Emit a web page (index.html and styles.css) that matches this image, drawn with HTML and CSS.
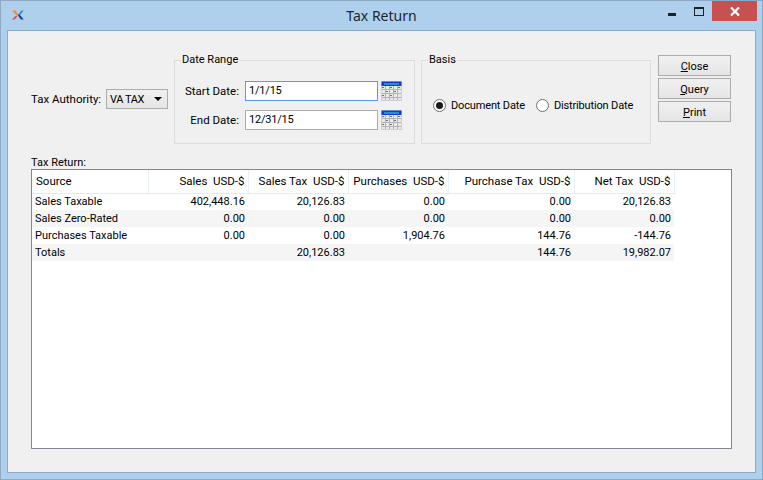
FILE: index.html
```html
<!DOCTYPE html>
<html lang="en">
<head>
<meta charset="utf-8">
<title>Tax Return</title>
<link rel="stylesheet" href="styles.css">
</head>
<body>
<svg class="defs" width="0" height="0" aria-hidden="true">
  <defs>
    <symbol id="cal" viewBox="0 0 21 20" preserveAspectRatio="none">
      <rect x="0" y="0" width="21" height="20" fill="#cfcfcf"/>
      <rect x="0.5" y="0.5" width="20" height="4.5" fill="#0b3ce0"/>
      <rect x="3" y="2" width="15" height="2" fill="#2e8fb0"/>
      <rect x="1" y="5" width="19" height="14" fill="#e8e8e8"/>
      <g fill="#b4b4b4">
        <rect x="1" y="8" width="19" height="1"/><rect x="1" y="12" width="19" height="1"/><rect x="1" y="16" width="19" height="1"/>
        <rect x="4" y="5" width="1" height="14"/><rect x="8" y="5" width="1" height="14"/><rect x="12" y="5" width="1" height="14"/><rect x="16" y="5" width="1" height="14"/>
      </g>
      <g fill="#707070">
        <rect x="1" y="6" width="2" height="1"/><rect x="9" y="6" width="2" height="1"/><rect x="17" y="6" width="2" height="1"/>
        <rect x="5" y="10" width="2" height="1"/><rect x="13" y="10" width="2" height="1"/><rect x="1" y="14" width="2" height="1"/><rect x="9" y="14" width="2" height="1"/>
      </g>
    </symbol>
  </defs>
</svg>
<div class="window">
  <header class="titlebar">
    <svg class="logo" width="12" height="10" viewBox="0 0 14 12">
      <path d="M0 0.5h4l3 4.5-1.6 1.6z" fill="#f08a35"/>
      <path d="M0 11.5l4.7-5 1.3 1.2-3.2 3.8z" fill="#e2402c"/>
      <path d="M8 4.5l3-4h3l-5 6z" fill="#2d8fe0"/>
      <path d="M6.5 6l1.8-1.2 5.7 6.7h-3.6z" fill="#1c3f9c"/>
    </svg>
    <h1 class="title">Tax Return</h1>
    <div class="controls">
      <span class="ctl ctl-min"><i></i></span>
      <span class="ctl ctl-max"><i></i></span>
      <span class="ctl ctl-close">
        <svg width="10" height="9" viewBox="0 0 10 9"><path d="M1 0.5l8 8M9 0.5l-8 8" stroke="#fff" stroke-width="2.2" fill="none"/></svg>
      </span>
    </div>
  </header>
  <main class="client">
    <section class="top">
      <div class="authority">
        <label class="lbl auth-lbl">Tax Authority:</label>
        <div class="combo"><span>VA TAX</span><i class="arrow"></i></div>
      </div>
      <fieldset class="group range">
        <legend>Date Range</legend>
        <div class="date-row">
          <label class="lbl date-lbl">Start Date:</label>
          <div class="input focus">1/1/15</div>
          <svg class="cal" width="21" height="20"><use href="#cal"/></svg>
        </div>
        <div class="date-row">
          <label class="lbl date-lbl">End Date:</label>
          <div class="input">12/31/15</div>
          <svg class="cal" width="21" height="20"><use href="#cal"/></svg>
        </div>
      </fieldset>
      <fieldset class="group basis">
        <legend>Basis</legend>
        <div class="radios">
          <span class="radio on"><i></i>Document Date</span>
          <span class="radio"><i></i>Distribution Date</span>
        </div>
      </fieldset>
      <div class="buttons">
        <button class="btn"><u>C</u>lose</button>
        <button class="btn"><u>Q</u>uery</button>
        <button class="btn"><u>P</u>rint</button>
      </div>
    </section>
    <div class="list-label">Tax Return:</div>
    <div class="list">
      <table class="grid">
        <colgroup>
          <col class="c-source"><col class="c-n"><col class="c-n"><col class="c-n"><col class="c-w"><col class="c-n">
        </colgroup>
        <thead>
          <tr>
            <th class="left">Source</th>
            <th>Sales&nbsp; USD-$</th>
            <th>Sales Tax&nbsp; USD-$</th>
            <th>Purchases&nbsp; USD-$</th>
            <th>Purchase Tax&nbsp; USD-$</th>
            <th>Net Tax&nbsp; USD-$</th>
          </tr>
        </thead>
        <tbody>
          <tr><td class="left">Sales Taxable</td><td>402,448.16</td><td>20,126.83</td><td>0.00</td><td>0.00</td><td>20,126.83</td></tr>
          <tr><td class="left">Sales Zero-Rated</td><td>0.00</td><td>0.00</td><td>0.00</td><td>0.00</td><td>0.00</td></tr>
          <tr><td class="left">Purchases Taxable</td><td>0.00</td><td>0.00</td><td>1,904.76</td><td>144.76</td><td>-144.76</td></tr>
          <tr><td class="left">Totals</td><td></td><td>20,126.83</td><td></td><td>144.76</td><td>19,982.07</td></tr>
        </tbody>
      </table>
    </div>
  </main>
</div>
</body>
</html>
```
FILE: styles.css
```css
* { box-sizing: border-box; }
html, body { margin: 0; padding: 0; }
body {
  width: 763px;
  height: 480px;
  overflow: hidden;
  font-family: Roboto, "Noto Sans", sans-serif;
  font-size: 11.5px;
  color: #000;
}
.defs { display: block; height: 0; }
.window {
  width: 763px;
  height: 480px;
  background: #aed0ec;
  border: 1px solid #8ea9c4;
  display: flex;
  flex-direction: column;
  padding: 0 6px 6px;
}
.titlebar {
  height: 29px;
  flex: none;
  display: flex;
  align-items: center;
  position: relative;
  padding-left: 5px;
}
.logo { margin-top: -1px; }
.title {
  position: absolute;
  left: 0;
  right: 0;
  top: 5px;
  margin: 0;
  text-align: center;
  font-family: "Noto Sans", sans-serif;
  font-size: 14px;
  font-weight: 400;
  line-height: 20px;
  color: #1c2530;
}
.controls {
  position: absolute;
  right: -1px;
  top: 0;
  display: flex;
  align-items: flex-start;
}
.ctl { display: block; height: 20px; position: relative; }
.ctl-min { width: 26px; }
.ctl-min i { position: absolute; left: 9px; top: 12px; width: 8px; height: 3px; background: #1b2228; }
.ctl-max { width: 27px; }
.ctl-max i { position: absolute; left: 9px; top: 6px; width: 10px; height: 9px; border: 1px solid #1b2228; border-top-width: 2px; }
.ctl-close {
  width: 45px;
  background: #c75050;
  display: flex;
  align-items: center;
  justify-content: center;
}
.client {
  flex: 1;
  background: #f0f0f0;
  border: 1px solid #8ea9c4;
  padding: 24px 23px 23px;
  display: flex;
  flex-direction: column;
}
.top {
  display: flex;
  align-items: flex-start;
  height: 102px;
  flex: none;
}
.authority {
  width: 143px;
  height: 80px;
  margin-top: 4px;
  display: flex;
  align-items: center;
}
.lbl { white-space: nowrap; }
.auth-lbl { width: 75px; }
.combo {
  width: 62px;
  height: 20px;
  border: 1px solid #acacac;
  background: linear-gradient(#f0f0f0, #e5e5e5);
  display: flex;
  align-items: center;
  justify-content: space-between;
  padding: 0 5px 0 3px;
  font-size: 11px;
  letter-spacing: -0.4px;
}
.arrow {
  width: 0;
  height: 0;
  border-left: 4px solid transparent;
  border-right: 4px solid transparent;
  border-top: 4px solid #000;
}
.group {
  margin: -1px 0 0;
  padding: 0;
  border: 1px solid #dcdcdc;
  height: 90px;
  min-width: 0;
}
.group legend {
  margin-left: 6px;
  padding: 0 1px;
  line-height: 12px;
  font-size: 11px;
}
.range { width: 241px; padding: 15px 0 0; display: flex; flex-direction: column; gap: 9px; }
.date-row { display: flex; align-items: center; height: 20px; }
.date-lbl { width: 64px; flex: none; text-align: right; margin-right: 6px; }
.input {
  width: 133px;
  flex: none;
  height: 20px;
  border: 1px solid #acacac;
  background: #fff;
  line-height: 18px;
  padding-left: 3px;
  font-size: 11px;
  letter-spacing: -0.2px;
}
.input.focus { border-color: #569de5; }
.cal { margin-left: 3px; display: block; flex: none; }
.basis { width: 230px; margin-left: 6px; }
.radios { display: flex; align-items: center; gap: 11px; padding: 33px 0 0 11px; font-size: 11px; letter-spacing: -0.15px; }
.radio { display: flex; align-items: center; gap: 5px; white-space: nowrap; }
.radio i {
  width: 13px;
  height: 13px;
  border-radius: 50%;
  border: 1px solid #707070;
  background: #fff;
  display: block;
  position: relative;
}
.radio.on i::after {
  content: "";
  position: absolute;
  left: 2px;
  top: 2px;
  width: 7px;
  height: 7px;
  border-radius: 50%;
  background: #1a1a1a;
}
.buttons {
  margin-left: 7px;
  display: flex;
  flex-direction: column;
  gap: 2px;
}
.btn {
  width: 73px;
  height: 21px;
  padding: 1px 0 0;
  border: 1px solid #acacac;
  background: linear-gradient(#f0f0f0, #e5e5e5);
  font: inherit;
  font-size: 11px;
  color: #000;
  line-height: 17px;
}
.list-label { line-height: 12px; height: 12px; flex: none; font-size: 11px; }
.list {
  flex: 1;
  width: 701px;
  background: #fff;
  border: 1px solid #828790;
}
.grid {
  border-collapse: collapse;
  table-layout: fixed;
  width: 642px;
}
.c-source { width: 116px; }
.c-n { width: 100px; }
.c-w { width: 126px; }
th, td {
  font-weight: 400;
  text-align: right;
  white-space: nowrap;
  overflow: hidden;
  padding: 0 3px 0 0;
}
th {
  height: 23px;
  border-right: 1px solid #e8f0f8;
  border-bottom: 1px solid #e3ecf6;
}
td { height: 17px; line-height: 15px; font-size: 11px; }
.left { text-align: left; padding-left: 3px; }
th.left { padding-left: 4px; }
tbody tr:nth-child(even) { background: #f5f5f5; }
u { text-underline-offset: 1px; }
```
